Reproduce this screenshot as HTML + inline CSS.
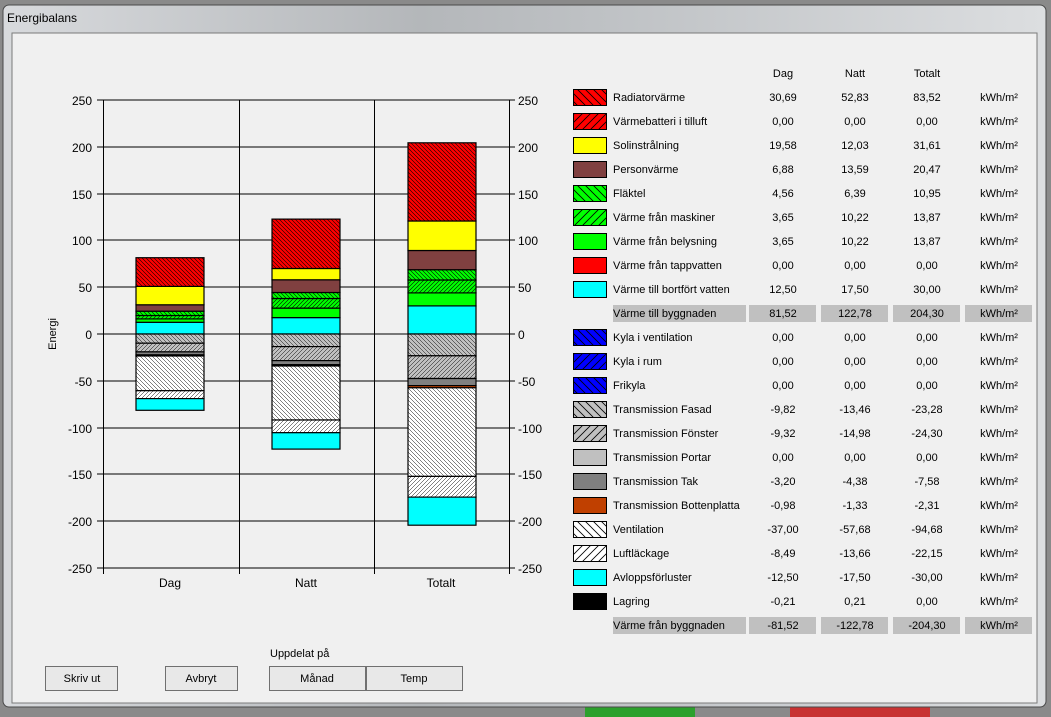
<!DOCTYPE html>
<html><head><meta charset="utf-8"><style>
html,body{margin:0;padding:0;width:1051px;height:717px;overflow:hidden;background:#6e6e6e}
svg{display:block;font-family:"Liberation Sans",sans-serif}
</style></head><body>
<svg width="1051" height="717" viewBox="0 0 1051 717" xmlns="http://www.w3.org/2000/svg">
<defs>
<linearGradient id="glass" x1="0" y1="0" x2="1" y2="0">
<stop offset="0" stop-color="#d8dadd"/><stop offset="0.4" stop-color="#b4b7ba"/><stop offset="0.6" stop-color="#c0c3c6"/><stop offset="1" stop-color="#dcdee0"/></linearGradient>
<pattern id="bR" width="4" height="4" patternUnits="userSpaceOnUse"><rect width="4" height="4" fill="#ff0000"/><path d="M-1,-1 L5,5 M-1,3 L1,5 M3,-1 L5,1" stroke="#000" stroke-width="0.55"/></pattern>
<pattern id="fR" width="4" height="4" patternUnits="userSpaceOnUse"><rect width="4" height="4" fill="#ff0000"/><path d="M-1,5 L5,-1 M-1,1 L1,-1 M3,5 L5,3" stroke="#000" stroke-width="0.55"/></pattern>
<pattern id="bG" width="4" height="4" patternUnits="userSpaceOnUse"><rect width="4" height="4" fill="#00ff00"/><path d="M-1,-1 L5,5 M-1,3 L1,5 M3,-1 L5,1" stroke="#000" stroke-width="0.55"/></pattern>
<pattern id="fG" width="4" height="4" patternUnits="userSpaceOnUse"><rect width="4" height="4" fill="#00ff00"/><path d="M-1,5 L5,-1 M-1,1 L1,-1 M3,5 L5,3" stroke="#000" stroke-width="0.55"/></pattern>
<pattern id="bS" width="4" height="4" patternUnits="userSpaceOnUse"><rect width="4" height="4" fill="#c0c0c0"/><path d="M-1,-1 L5,5 M-1,3 L1,5 M3,-1 L5,1" stroke="#000" stroke-width="0.5"/></pattern>
<pattern id="fS" width="4" height="4" patternUnits="userSpaceOnUse"><rect width="4" height="4" fill="#c0c0c0"/><path d="M-1,5 L5,-1 M-1,1 L1,-1 M3,5 L5,3" stroke="#000" stroke-width="0.5"/></pattern>
<pattern id="bW" width="4" height="4" patternUnits="userSpaceOnUse"><rect width="4" height="4" fill="#fff"/><path d="M-1,-1 L5,5 M-1,3 L1,5 M3,-1 L5,1" stroke="#000" stroke-width="0.5"/></pattern>
<pattern id="fW" width="4" height="4" patternUnits="userSpaceOnUse"><rect width="4" height="4" fill="#fff"/><path d="M-1,5 L5,-1 M-1,1 L1,-1 M3,5 L5,3" stroke="#000" stroke-width="0.5"/></pattern>
<pattern id="lbR" width="8" height="8" patternUnits="userSpaceOnUse"><rect width="8" height="8" fill="#ff0000"/><path d="M-1,-1 L9,9 M-1,7 L1,9 M7,-1 L9,1" stroke="#000" stroke-width="0.8"/></pattern>
<pattern id="lfR" width="8" height="8" patternUnits="userSpaceOnUse"><rect width="8" height="8" fill="#ff0000"/><path d="M-1,9 L9,-1 M-1,1 L1,-1 M7,9 L9,7" stroke="#000" stroke-width="0.8"/></pattern>
<pattern id="lbG" width="8" height="8" patternUnits="userSpaceOnUse"><rect width="8" height="8" fill="#00ff00"/><path d="M-1,-1 L9,9 M-1,7 L1,9 M7,-1 L9,1" stroke="#000" stroke-width="0.8"/></pattern>
<pattern id="lfG" width="8" height="8" patternUnits="userSpaceOnUse"><rect width="8" height="8" fill="#00ff00"/><path d="M-1,9 L9,-1 M-1,1 L1,-1 M7,9 L9,7" stroke="#000" stroke-width="0.8"/></pattern>
<pattern id="lbB" width="8" height="8" patternUnits="userSpaceOnUse"><rect width="8" height="8" fill="#0000ff"/><path d="M-1,-1 L9,9 M-1,7 L1,9 M7,-1 L9,1" stroke="#000" stroke-width="0.8"/></pattern>
<pattern id="lfB" width="8" height="8" patternUnits="userSpaceOnUse"><rect width="8" height="8" fill="#0000ff"/><path d="M-1,9 L9,-1 M-1,1 L1,-1 M7,9 L9,7" stroke="#000" stroke-width="0.8"/></pattern>
<pattern id="lbS" width="8" height="8" patternUnits="userSpaceOnUse"><rect width="8" height="8" fill="#c0c0c0"/><path d="M-1,-1 L9,9 M-1,7 L1,9 M7,-1 L9,1" stroke="#000" stroke-width="0.8"/></pattern>
<pattern id="lfS" width="8" height="8" patternUnits="userSpaceOnUse"><rect width="8" height="8" fill="#c0c0c0"/><path d="M-1,9 L9,-1 M-1,1 L1,-1 M7,9 L9,7" stroke="#000" stroke-width="0.8"/></pattern>
<pattern id="lbW" width="8" height="8" patternUnits="userSpaceOnUse"><rect width="8" height="8" fill="#fff"/><path d="M-1,-1 L9,9 M-1,7 L1,9 M7,-1 L9,1" stroke="#000" stroke-width="0.8"/></pattern>
<pattern id="lfW" width="8" height="8" patternUnits="userSpaceOnUse"><rect width="8" height="8" fill="#fff"/><path d="M-1,9 L9,-1 M-1,1 L1,-1 M7,9 L9,7" stroke="#000" stroke-width="0.8"/></pattern>
</defs>

<rect x="0" y="0" width="1051" height="717" fill="#8a8a8a"/>
<rect x="585" y="706" width="110" height="11" fill="#2ca02c"/>
<rect x="790" y="706" width="140" height="11" fill="#c83232"/>
<rect x="3" y="5" width="1043" height="702" rx="6" fill="url(#glass)" stroke="#4a4a4a"/>
<text x="7" y="22" font-size="12" fill="#000">Energibalans</text>
<rect x="12" y="33" width="1025" height="670" fill="#f0f0f0" stroke="#7a7a7a"/>

<g stroke="#000" stroke-width="1" fill="none">
<path d="M103,100 H509 M103,147 H509 M103,194 H509 M103,240 H509 M103,287 H509 M103,334 H509 M103,381 H509 M103,428 H509 M103,474 H509 M103,521 H509 M103,568 H509"/>
<path d="M103.5,100 V574 M239.5,100 V574 M374.5,100 V574 M509.5,100 V574"/>
<path d="M97,100 H103 M97,147 H103 M97,194 H103 M97,240 H103 M97,287 H103 M97,334 H103 M97,381 H103 M97,428 H103 M97,474 H103 M97,521 H103 M97,568 H103"/>
<path d="M509,100 H515 M509,147 H515 M509,194 H515 M509,240 H515 M509,287 H515 M509,334 H515 M509,381 H515 M509,428 H515 M509,474 H515 M509,521 H515 M509,568 H515"/>
</g>
<g font-size="12" fill="#000" text-anchor="end">
<text x="92" y="105">250</text><text x="92" y="152">200</text><text x="92" y="199">150</text><text x="92" y="245">100</text><text x="92" y="292">50</text><text x="92" y="339">0</text><text x="92" y="386">-50</text><text x="92" y="433">-100</text><text x="92" y="479">-150</text><text x="92" y="526">-200</text><text x="92" y="573">-250</text>
</g>
<g font-size="12" fill="#000">
<text x="518" y="105">250</text><text x="518" y="152">200</text><text x="518" y="199">150</text><text x="518" y="245">100</text><text x="518" y="292">50</text><text x="518" y="339">0</text><text x="518" y="386">-50</text><text x="518" y="433">-100</text><text x="518" y="479">-150</text><text x="518" y="526">-200</text><text x="518" y="573">-250</text>
</g>
<text transform="translate(56,334) rotate(-90)" font-size="11" text-anchor="middle">Energi</text>
<g font-size="12" text-anchor="middle">
<text x="170" y="587">Dag</text><text x="306" y="587">Natt</text><text x="441" y="587">Totalt</text>
</g>

<g stroke="#000" stroke-width="1.2">
<rect x="136" y="322.3" width="68" height="11.7" fill="#00ffff"/>
<rect x="136" y="318.9" width="68" height="3.4" fill="#00ff00"/>
<rect x="136" y="315.5" width="68" height="3.4" fill="url(#fG)"/>
<rect x="136" y="311.2" width="68" height="4.3" fill="url(#bG)"/>
<rect x="136" y="304.8" width="68" height="6.4" fill="#804040"/>
<rect x="136" y="286.4" width="68" height="18.4" fill="#ffff00"/>
<rect x="136" y="257.7" width="68" height="28.7" fill="url(#bR)"/>
<rect x="136" y="334" width="68" height="9.2" fill="url(#bS)"/>
<rect x="136" y="343.2" width="68" height="8.7" fill="url(#fS)"/>
<rect x="136" y="351.9" width="68" height="3" fill="#808080"/>
<rect x="136" y="354.9" width="68" height="1.1" fill="#000"/>
<rect x="136" y="356" width="68" height="34.7" fill="url(#bW)"/>
<rect x="136" y="390.7" width="68" height="7.9" fill="url(#fW)"/>
<rect x="136" y="398.6" width="68" height="11.7" fill="#00ffff"/>
<rect x="272" y="317.6" width="68" height="16.4" fill="#00ffff"/>
<rect x="272" y="308.1" width="68" height="9.5" fill="#00ff00"/>
<rect x="272" y="298.5" width="68" height="9.6" fill="url(#fG)"/>
<rect x="272" y="292.5" width="68" height="6" fill="url(#bG)"/>
<rect x="272" y="279.8" width="68" height="12.7" fill="#804040"/>
<rect x="272" y="268.5" width="68" height="11.3" fill="#ffff00"/>
<rect x="272" y="219.1" width="68" height="49.4" fill="url(#bR)"/>
<rect x="272" y="334" width="68" height="12.6" fill="url(#bS)"/>
<rect x="272" y="346.6" width="68" height="14" fill="url(#fS)"/>
<rect x="272" y="360.6" width="68" height="4.1" fill="#808080"/>
<rect x="272" y="364.7" width="68" height="1.3" fill="#000"/>
<rect x="272" y="366" width="68" height="54" fill="url(#bW)"/>
<rect x="272" y="420" width="68" height="12.7" fill="url(#fW)"/>
<rect x="272" y="432.7" width="68" height="16.4" fill="#00ffff"/>
<rect x="408" y="305.9" width="68" height="28.1" fill="#00ffff"/>
<rect x="408" y="292.9" width="68" height="13" fill="#00ff00"/>
<rect x="408" y="280" width="68" height="12.9" fill="url(#fG)"/>
<rect x="408" y="269.7" width="68" height="10.3" fill="url(#bG)"/>
<rect x="408" y="250.5" width="68" height="19.2" fill="#804040"/>
<rect x="408" y="221" width="68" height="29.5" fill="#ffff00"/>
<rect x="408" y="142.8" width="68" height="78.2" fill="url(#bR)"/>
<rect x="408" y="334" width="68" height="21.8" fill="url(#bS)"/>
<rect x="408" y="355.8" width="68" height="22.7" fill="url(#fS)"/>
<rect x="408" y="378.5" width="68" height="7.1" fill="#808080"/>
<rect x="408" y="385.6" width="68" height="2.2" fill="#c04000"/>
<rect x="408" y="387.8" width="68" height="88.6" fill="url(#bW)"/>
<rect x="408" y="476.4" width="68" height="20.7" fill="url(#fW)"/>
<rect x="408" y="497.1" width="68" height="28.1" fill="#00ffff"/>
</g>

<g font-size="11" fill="#000" text-anchor="middle">
<text x="783" y="77">Dag</text><text x="855" y="77">Natt</text><text x="927" y="77">Totalt</text>
</g>
<g stroke="#000" stroke-width="1">
<rect x="573.5" y="89.5" width="33" height="16" fill="url(#lbR)"/>
<rect x="573.5" y="113.5" width="33" height="16" fill="url(#lfR)"/>
<rect x="573.5" y="137.5" width="33" height="16" fill="#ffff00"/>
<rect x="573.5" y="161.5" width="33" height="16" fill="#804040"/>
<rect x="573.5" y="185.5" width="33" height="16" fill="url(#lbG)"/>
<rect x="573.5" y="209.5" width="33" height="16" fill="url(#lfG)"/>
<rect x="573.5" y="233.5" width="33" height="16" fill="#00ff00"/>
<rect x="573.5" y="257.5" width="33" height="16" fill="#ff0000"/>
<rect x="573.5" y="281.5" width="33" height="16" fill="#00ffff"/>
<rect x="573.5" y="329.5" width="33" height="16" fill="url(#lbB)"/>
<rect x="573.5" y="353.5" width="33" height="16" fill="url(#lfB)"/>
<rect x="573.5" y="377.5" width="33" height="16" fill="url(#lbB)"/>
<rect x="573.5" y="401.5" width="33" height="16" fill="url(#lbS)"/>
<rect x="573.5" y="425.5" width="33" height="16" fill="url(#lfS)"/>
<rect x="573.5" y="449.5" width="33" height="16" fill="#c0c0c0"/>
<rect x="573.5" y="473.5" width="33" height="16" fill="#808080"/>
<rect x="573.5" y="497.5" width="33" height="16" fill="#c04000"/>
<rect x="573.5" y="521.5" width="33" height="16" fill="url(#lbW)"/>
<rect x="573.5" y="545.5" width="33" height="16" fill="url(#lfW)"/>
<rect x="573.5" y="569.5" width="33" height="16" fill="#00ffff"/>
<rect x="573.5" y="593.5" width="33" height="16" fill="#000"/>
</g>
<g fill="#c0c0c0">
<rect x="613" y="305" width="133" height="17"/><rect x="749" y="305" width="67" height="17"/><rect x="821" y="305" width="67" height="17"/><rect x="893" y="305" width="67" height="17"/><rect x="965" y="305" width="67" height="17"/>
<rect x="613" y="617" width="133" height="17"/><rect x="749" y="617" width="67" height="17"/><rect x="821" y="617" width="67" height="17"/><rect x="893" y="617" width="67" height="17"/><rect x="965" y="617" width="67" height="17"/>
</g>
<g font-size="11" fill="#000">
<text x="613" y="101">Radiatorvärme</text>
<text x="613" y="125">Värmebatteri i tilluft</text>
<text x="613" y="149">Solinstrålning</text>
<text x="613" y="173">Personvärme</text>
<text x="613" y="197">Fläktel</text>
<text x="613" y="221">Värme från maskiner</text>
<text x="613" y="245">Värme från belysning</text>
<text x="613" y="269">Värme från tappvatten</text>
<text x="613" y="293">Värme till bortfört vatten</text>
<text x="613" y="317">Värme till byggnaden</text>
<text x="613" y="341">Kyla i ventilation</text>
<text x="613" y="365">Kyla i rum</text>
<text x="613" y="389">Frikyla</text>
<text x="613" y="413">Transmission Fasad</text>
<text x="613" y="437">Transmission Fönster</text>
<text x="613" y="461">Transmission Portar</text>
<text x="613" y="485">Transmission Tak</text>
<text x="613" y="509">Transmission Bottenplatta</text>
<text x="613" y="533">Ventilation</text>
<text x="613" y="557">Luftläckage</text>
<text x="613" y="581">Avloppsförluster</text>
<text x="613" y="605">Lagring</text>
<text x="613" y="629">Värme från byggnaden</text>
</g>
<g font-size="11" fill="#000" text-anchor="middle">
<g transform="translate(783,0)">
<text y="101">30,69</text><text y="125">0,00</text><text y="149">19,58</text><text y="173">6,88</text><text y="197">4,56</text><text y="221">3,65</text><text y="245">3,65</text><text y="269">0,00</text><text y="293">12,50</text><text y="317">81,52</text><text y="341">0,00</text><text y="365">0,00</text><text y="389">0,00</text><text y="413">-9,82</text><text y="437">-9,32</text><text y="461">0,00</text><text y="485">-3,20</text><text y="509">-0,98</text><text y="533">-37,00</text><text y="557">-8,49</text><text y="581">-12,50</text><text y="605">-0,21</text><text y="629">-81,52</text>
</g>
<g transform="translate(855,0)">
<text y="101">52,83</text><text y="125">0,00</text><text y="149">12,03</text><text y="173">13,59</text><text y="197">6,39</text><text y="221">10,22</text><text y="245">10,22</text><text y="269">0,00</text><text y="293">17,50</text><text y="317">122,78</text><text y="341">0,00</text><text y="365">0,00</text><text y="389">0,00</text><text y="413">-13,46</text><text y="437">-14,98</text><text y="461">0,00</text><text y="485">-4,38</text><text y="509">-1,33</text><text y="533">-57,68</text><text y="557">-13,66</text><text y="581">-17,50</text><text y="605">0,21</text><text y="629">-122,78</text>
</g>
<g transform="translate(927,0)">
<text y="101">83,52</text><text y="125">0,00</text><text y="149">31,61</text><text y="173">20,47</text><text y="197">10,95</text><text y="221">13,87</text><text y="245">13,87</text><text y="269">0,00</text><text y="293">30,00</text><text y="317">204,30</text><text y="341">0,00</text><text y="365">0,00</text><text y="389">0,00</text><text y="413">-23,28</text><text y="437">-24,30</text><text y="461">0,00</text><text y="485">-7,58</text><text y="509">-2,31</text><text y="533">-94,68</text><text y="557">-22,15</text><text y="581">-30,00</text><text y="605">0,00</text><text y="629">-204,30</text>
</g>
<g transform="translate(999,0)">
<text y="101">kWh/m²</text><text y="125">kWh/m²</text><text y="149">kWh/m²</text><text y="173">kWh/m²</text><text y="197">kWh/m²</text><text y="221">kWh/m²</text><text y="245">kWh/m²</text><text y="269">kWh/m²</text><text y="293">kWh/m²</text><text y="317">kWh/m²</text><text y="341">kWh/m²</text><text y="365">kWh/m²</text><text y="389">kWh/m²</text><text y="413">kWh/m²</text><text y="437">kWh/m²</text><text y="461">kWh/m²</text><text y="485">kWh/m²</text><text y="509">kWh/m²</text><text y="533">kWh/m²</text><text y="557">kWh/m²</text><text y="581">kWh/m²</text><text y="605">kWh/m²</text><text y="629">kWh/m²</text>
</g>
</g>

<text x="270" y="657" font-size="11">Uppdelat på</text>
<g stroke-width="1">
<rect x="45.5" y="666.5" width="72" height="24" fill="#e8e8e8" stroke="#707070"/>
<rect x="165.5" y="666.5" width="72" height="24" fill="#e8e8e8" stroke="#707070"/>
<rect x="269.5" y="666.5" width="96" height="24" fill="#e8e8e8" stroke="#707070"/>
<rect x="366.5" y="666.5" width="96" height="24" fill="#e8e8e8" stroke="#707070"/>
</g>
<g font-size="11" text-anchor="middle">
<text x="82" y="682">Skriv ut</text><text x="201" y="682">Avbryt</text><text x="317" y="682">Månad</text><text x="414" y="682">Temp</text>
</g>
</svg>
</body></html>
